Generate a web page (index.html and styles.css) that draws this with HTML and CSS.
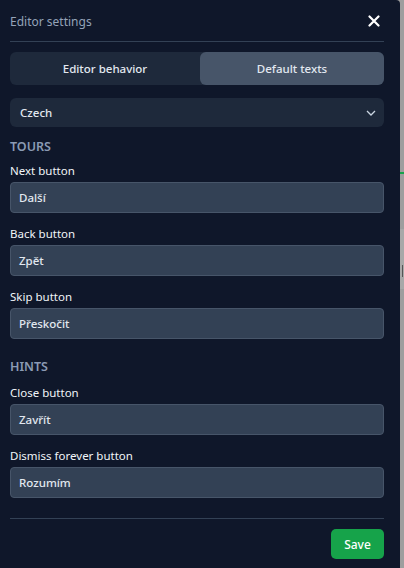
FILE: index.html
```html
<!DOCTYPE html>
<html lang="cs">
<head>
<meta charset="utf-8">
<title>Editor settings</title>
<link rel="stylesheet" href="styles.css">
</head>
<body>
<div class="page">
  <section class="panel">
    <header class="header">
      <h1 class="title">Editor settings</h1>
      <button class="close" aria-label="Close">
        <svg width="12" height="12" viewBox="0 0 12 12"><path d="M1.5 1.5L10.5 10.5M10.5 1.5L1.5 10.5" stroke="#fff" stroke-width="2.2" stroke-linecap="round"/></svg>
      </button>
    </header>
    <div class="tabs">
      <div class="tab">Editor behavior</div>
      <div class="tab active">Default texts</div>
    </div>
    <div class="select">
      <span>Czech</span>
      <svg width="10" height="6" viewBox="0 0 10 6"><path d="M1 1L5 5L9 1" fill="none" stroke="#cbd5e1" stroke-width="1.3"/></svg>
    </div>
    <h2 class="section-title">TOURS</h2>
    <div class="field">
      <label class="label">Next button</label>
      <div class="input">Další</div>
    </div>
    <div class="field">
      <label class="label">Back button</label>
      <div class="input">Zpět</div>
    </div>
    <div class="field">
      <label class="label">Skip button</label>
      <div class="input">Přeskočit</div>
    </div>
    <h2 class="section-title second">HINTS</h2>
    <div class="field">
      <label class="label">Close button</label>
      <div class="input">Zavřít</div>
    </div>
    <div class="field">
      <label class="label">Dismiss forever button</label>
      <div class="input">Rozumím</div>
    </div>
    <footer class="footer">
      <button class="save">Save</button>
    </footer>
  </section>
  <aside class="backdrop">
    <div class="green-line"></div>
    <div class="light-area"><div class="sliver"></div></div>
  </aside>
</div>
</body>
</html>
```
FILE: styles.css
```css
* { box-sizing: border-box; }
html, body { margin: 0; padding: 0; }
body {
  width: 404px;
  height: 568px;
  overflow: hidden;
  background: #9e9e9e;
  font-family: "Noto Sans", "Open Sans", sans-serif;
  font-size: 11.5px;
  color: #e2e8f0;
}
.page { display: flex; height: 568px; }
.panel {
  width: 400px;
  height: 568px;
  background: #0f172a;
  border-top-right-radius: 4px;
  padding: 0 16px 0 10px;
  display: flex;
  flex-direction: column;
}
.header {
  height: 42px;
  padding-top: 2px;
  border-bottom: 1px solid #334155;
  display: flex;
  align-items: center;
  justify-content: space-between;
}
.title {
  margin: 0;
  font-size: 12px;
  font-weight: 400;
  color: #94a3b8;
  line-height: 18px;
}
.close {
  background: none;
  border: 0;
  padding: 0;
  margin-right: 4px;
  margin-bottom: 1px;
  width: 12px;
  height: 12px;
  display: flex;
}
.tabs {
  margin-top: 10px;
  height: 33px;
  display: grid;
  grid-template-columns: 190px 1fr;
  background: #1e293b;
  border-radius: 6px;
}
.tab {
  display: flex;
  align-items: center;
  justify-content: center;
  font-weight: 500;
  color: #e2e8f0;
  border-radius: 6px;
}
.tab.active { background: #475569; }
.select {
  margin-top: 13px;
  height: 29px;
  background: #1e293b;
  border-radius: 6px;
  padding: 0 8px 0 10px;
  display: flex;
  align-items: center;
  justify-content: space-between;
  color: #e2e8f0;
  font-weight: 500;
}
.section-title {
  margin: 11px 0 5px;
  font-size: 12.5px;
  line-height: 18px;
  font-weight: 600;
  color: #8b9bb4;
}
.section-title.second { margin-top: 8px; margin-bottom: 7px; }
.field { display: flex; flex-direction: column; margin-bottom: 11px; }
.label { line-height: 16px; padding-top: 2px; margin-bottom: 3px; color: #f1f5f9; }
.input {
  height: 31px;
  background: #334155;
  border: 1px solid #475569;
  border-radius: 4px;
  padding: 0 8px;
  display: flex;
  align-items: center;
  color: #e2e8f0;
  font-weight: 500;
}
.footer {
  margin-top: 9px;
  border-top: 1px solid #334155;
  padding-top: 10px;
  display: flex;
  justify-content: flex-end;
}
.save {
  width: 53px;
  height: 30px;
  background: #16a34a;
  color: #fff;
  border: 0;
  border-radius: 5px;
  font-family: inherit;
  font-size: 12px;
  font-weight: 500;
}
.backdrop {
  flex: 1;
  padding-top: 172px;
  overflow: hidden;
}
.green-line { height: 2px; background: #16a34a; }
.light-area {
  margin-top: 55px;
  height: 60px;
  background: #a8a8a8;
  padding-top: 36px;
  padding-left: 2px;
}
.sliver { width: 1px; height: 12px; background: #555; }
```
